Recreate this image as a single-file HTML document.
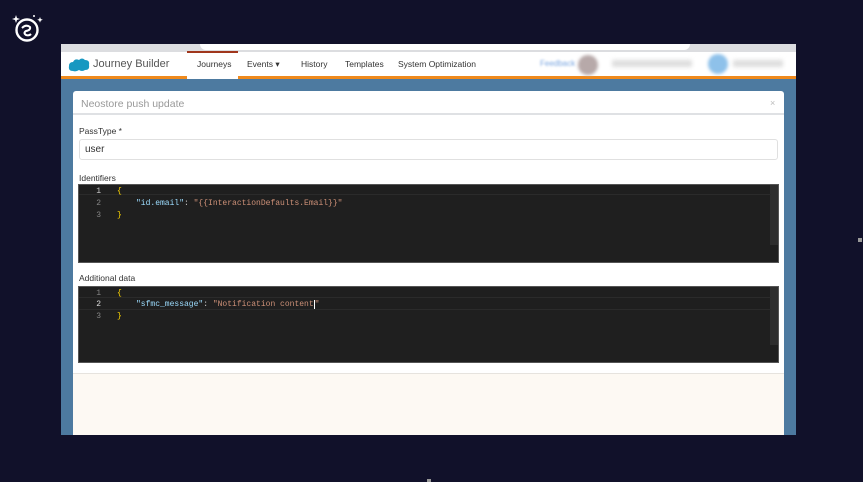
<!DOCTYPE html>
<html><head><meta charset="utf-8"><style>
*{margin:0;padding:0;box-sizing:border-box}
body{width:863px;height:482px;background:#11112a;position:relative;overflow:hidden;font-family:"Liberation Sans",sans-serif}
.a{position:absolute}
.mono{font-family:"Liberation Mono",monospace;font-size:8px}
.ed{background:#1f1f1f;border:1px solid #555}
.ln{color:#858585;width:22px;text-align:right}
</style></head><body>
<svg class="a" style="left:10px;top:12px" width="36" height="30" viewBox="0 0 36 30">
<circle cx="17" cy="18" r="10.5" fill="none" stroke="#fff" stroke-width="2.4"/>
<path d="M12 16 Q16 12 20 15 Q21 18 16 19 Q13 21 16 23 Q19 24 21 22" fill="none" stroke="#fff" stroke-width="2"/>
<path d="M6 3 l1 3 3 1 -3 1 -1 3 -1 -3 -3 -1 3 -1z" fill="#fff"/>
<path d="M30 5 l0.8 2 2 0.8 -2 0.8 -0.8 2 -0.8 -2 -2 -0.8 2 -0.8z" fill="#fff"/>
<circle cx="24" cy="4" r="1" fill="#fff"/>
</svg>
<div class="a" style="left:61px;top:44px;width:735px;height:391px;background:#4d7aa0"></div>
<div class="a" style="left:61px;top:44px;width:735px;height:9px;background:#dcdde0"></div>
<div class="a" style="left:200px;top:44px;width:490px;height:6px;background:#fff;border-radius:0 0 6px 6px"></div>
<div class="a" style="left:61px;top:52px;width:735px;height:24px;background:#fff"></div>
<div class="a" style="left:61px;top:76px;width:735px;height:3px;background:#f08a1c"></div>
<div class="a" style="left:187px;top:51px;width:51px;height:28px;background:#fff;border-top:2px solid #a0361c"></div>
<svg class="a" style="left:68px;top:57px" width="22" height="15" viewBox="0 0 22 15"><path d="M5 14 Q0 14 1 9 Q1 5 5 5 Q7 1 11 3 Q14 0 17 3 Q22 3 21 8 Q22 13 17 13 Q14 15 11 13 Q8 15 5 14z" fill="#1798c1"/></svg>
<div class="a" style="left:93px;top:58px;font-size:11px;color:#555">Journey Builder</div>
<div class="a" style="left:197px;top:59px;font-size:8.5px;color:#333">Journeys</div>
<div class="a" style="left:247px;top:59px;font-size:8.5px;color:#333">Events ▾</div>
<div class="a" style="left:301px;top:59px;font-size:8.5px;color:#333">History</div>
<div class="a" style="left:345px;top:59px;font-size:8.5px;color:#333">Templates</div>
<div class="a" style="left:398px;top:59px;font-size:8.5px;color:#333">System Optimization</div>
<div class="a" style="left:540px;top:59px;font-size:8px;color:#7aa6e0;filter:blur(1px)">Feedback</div>
<div class="a" style="left:578px;top:55px;width:20px;height:20px;border-radius:50%;background:#b7a9a9;filter:blur(1.5px)"></div>
<div class="a" style="left:612px;top:60px;width:80px;height:7px;background:#ddd;filter:blur(2px)"></div>
<div class="a" style="left:708px;top:54px;width:20px;height:20px;border-radius:50%;background:#8ec1ea;filter:blur(1.5px)"></div>
<div class="a" style="left:733px;top:60px;width:50px;height:7px;background:#ddd;filter:blur(2px)"></div>
<div class="a" style="left:73px;top:91px;width:711px;height:344px;background:#fff;border-radius:3px 3px 0 0"></div>
<div class="a" style="left:73px;top:113px;width:711px;height:2px;background:#dfe1e4"></div>
<div class="a" style="left:81px;top:98px;font-size:10.5px;color:#999">Neostore push update</div>
<div class="a" style="left:770px;top:98px;font-size:9px;color:#bbb">×</div>
<div class="a" style="left:79px;top:126px;font-size:8.5px;color:#333">PassType *</div>
<div class="a" style="left:79px;top:139px;width:699px;height:21px;border:1px solid #e0e0e0;border-radius:3px;font-size:10px;color:#333;padding:4px 5px">user</div>
<div class="a" style="left:79px;top:173px;font-size:8.5px;color:#333">Identifiers</div>
<div class="a ed" style="left:78px;top:184px;width:701px;height:79px">
 <div class="a" style="right:0;top:0;width:8px;height:60px;background:#2e2e2e"></div>
 <div class="a" style="left:0;top:9px;width:692px;height:1px;background:#2b2b2b"></div>
 <div class="a mono ln" style="left:0;top:2px;color:#ccc">1</div>
 <div class="a mono ln" style="left:0;top:14px">2</div>
 <div class="a mono ln" style="left:0;top:26px">3</div>
 <div class="a mono" style="left:38px;top:2px;color:#ffd700">{</div>
 <div class="a mono" style="left:57px;top:14px;color:#ce9178;white-space:pre"><span style="color:#9cdcfe">"id.email"</span><span style="color:#ccc">: </span>"{{InteractionDefaults.Email}}"</div>
 <div class="a mono" style="left:38px;top:26px;color:#ffd700">}</div>
</div>
<div class="a" style="left:79px;top:273px;font-size:8.5px;color:#333">Additional data</div>
<div class="a ed" style="left:78px;top:286px;width:701px;height:77px">
 <div class="a" style="right:0;top:0;width:8px;height:58px;background:#2e2e2e"></div>
 <div class="a" style="left:0;top:10px;width:692px;height:1px;background:#2b2b2b"></div>
 <div class="a" style="left:0;top:22px;width:692px;height:1px;background:#2b2b2b"></div>
 <div class="a mono ln" style="left:0;top:2px">1</div>
 <div class="a mono ln" style="left:0;top:13px;color:#ddd">2</div>
 <div class="a mono ln" style="left:0;top:25px">3</div>
 <div class="a mono" style="left:38px;top:2px;color:#ffd700">{</div>
 <div class="a mono" style="left:57px;top:13px;color:#ce9178;white-space:pre"><span style="color:#9cdcfe">"sfmc_message"</span><span style="color:#ccc">: </span>"Notification content<span style="border-left:1px solid #fff"></span>"</div>
 <div class="a mono" style="left:38px;top:25px;color:#ffd700">}</div>
</div>
<div class="a" style="left:73px;top:373px;width:711px;height:62px;background:#fdf9f3;border-top:1px solid #e6e3de"></div>
<div class="a" style="left:858px;top:238px;width:4px;height:4px;background:#999"></div>
<div class="a" style="left:427px;top:479px;width:4px;height:3px;background:#999"></div>
</body></html>
